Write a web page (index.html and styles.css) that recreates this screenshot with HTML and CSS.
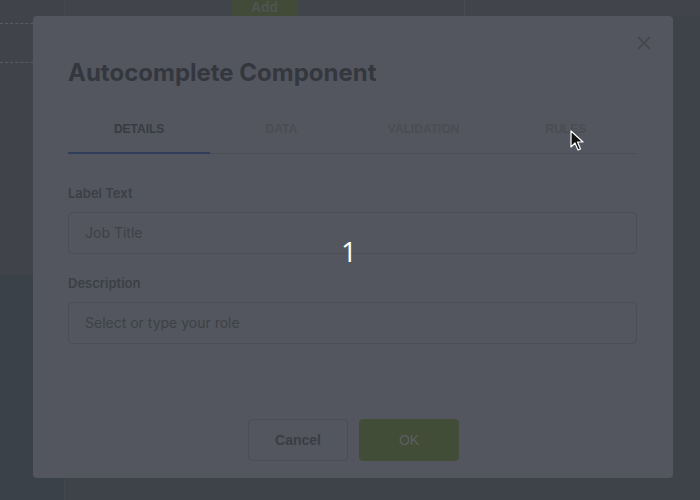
FILE: index.html
```html
<!DOCTYPE html>
<html>
<head>
<meta charset="utf-8">
<link rel="stylesheet" href="styles.css">
</head>
<body>
<div class="page">
  <div class="left-col">
    <div class="left-top"><div class="dash-box"></div></div>
    <div class="left-bottom"></div>
  </div>
  <div class="main">
    <div class="toolbar">
      <div class="add-btn">Add</div>
      <div class="tb-divider"></div>
    </div>
  </div>
</div>

<div class="modal">
  <button class="close" aria-label="Close">
    <svg width="14" height="14" viewBox="0 0 14 14"><path d="M1 1L13 13M13 1L1 13" stroke="#45484f" stroke-width="1.8" fill="none"/></svg>
  </button>
  <h1 class="title">Autocomplete Component</h1>
  <div class="tabs">
    <div class="tab active">DETAILS</div>
    <div class="tab">DATA</div>
    <div class="tab">VALIDATION</div>
    <div class="tab">RULES</div>
  </div>
  <div class="body">
    <label class="field-label">Label Text</label>
    <div class="input">Job Title</div>
    <label class="field-label second">Description</label>
    <div class="input">Select or type your role</div>
  </div>
  <div class="footer">
    <button class="btn cancel">Cancel</button>
    <button class="btn ok">OK</button>
  </div>
</div>

<div class="step-num">1</div>
<svg class="cursor" width="14" height="22" viewBox="0 0 14 22"><path d="M1 1L1 17L5 13L8 20L10.5 19L7.5 12L13 12Z" fill="#111" stroke="#fff" stroke-width="1.2" stroke-linejoin="round"/></svg>
</body>
</html>
```
FILE: styles.css
```css
* { box-sizing: border-box; }
html, body { margin: 0; padding: 0; }
body {
  width: 700px;
  height: 500px;
  overflow: hidden;
  background: #3e4249;
  font-family: Inter, "Liberation Sans", sans-serif;
  position: relative;
}
.page { display: flex; height: 500px; }
.left-col {
  width: 65px;
  border-right: 1px solid #44484e;
  display: flex;
  flex-direction: column;
  background: #404349;
}
.left-top { height: 275px; padding-top: 23px; }
.dash-box {
  height: 40px;
  border-top: 1px dashed #585c63;
  border-bottom: 1px dashed #585c63;
}
.left-bottom { flex: 1; background: #3b4149; }
.main { flex: 1; }
.toolbar {
  height: 16px;
  display: flex;
  background: #41444a;
}
.add-btn {
  margin-left: 167px;
  width: 65px;
  height: 16px;
  background: #414b37;
  color: #4f5453;
  font: 700 14px/14px "Liberation Sans", Arial, sans-serif;
  text-align: center;
}
.tb-divider {
  margin-left: 167px;
  border-left: 1px dashed #4c5057;
}
.modal {
  position: absolute;
  left: 33px;
  top: 16px;
  width: 640px;
  height: 462px;
  background: #53565e;
  border-radius: 4px;
  padding: 42px 36px 17px 35px;
  display: flex;
  flex-direction: column;
}
.close {
  position: absolute;
  right: 22px;
  top: 20px;
  border: 0;
  background: none;
  padding: 0;
  width: 14px;
  height: 14px;
  display: block;
}
.close svg { display: block; }
.title {
  margin: 0;
  font: 700 24px/30px Inter, "Liberation Sans", sans-serif;
  color: #34373e;
}
.tabs {
  margin-top: 17px;
  display: flex;
  border-bottom: 1px solid #4b4e55;
}
.tab {
  flex: 1;
  text-align: center;
  padding: 16px 0 15px;
  font: 700 12px/16px "Liberation Sans", Arial, sans-serif;
  color: #4a4d54;
  border-bottom: 2px solid transparent;
  margin-bottom: -1px;
}
.tab.active {
  color: #383b42;
  border-bottom-color: #303e59;
}
.body { flex: 1; display: flex; flex-direction: column; }
.field-label {
  display: block;
  margin-top: 31px;
  font: 600 13px/16px Inter, "Liberation Sans", sans-serif;
  color: #3c3f46;
}
.field-label.second { margin-top: 21px; }
.input {
  margin-top: 11px;
  height: 42px;
  border: 1px solid #4b4e55;
  border-radius: 4px;
  padding: 0 16px;
  display: flex;
  align-items: center;
  font: 400 14px/20px Inter, "Liberation Sans", sans-serif;
  color: #3e4147;
}
.footer {
  display: flex;
  justify-content: center;
  gap: 11px;
  padding-left: 2px;
}
.btn {
  width: 100px;
  height: 42px;
  border-radius: 4px;
  font: 700 14px/16px "Liberation Sans", Arial, sans-serif;
  padding: 0;
}
.cancel {
  background: transparent;
  border: 1px solid #4b4e55;
  color: #3a3d44;
}
.ok {
  background: #414d36;
  border: 1px solid #414d36;
  color: #5b5f62;
  font-weight: 400;
}
.step-num {
  position: absolute;
  left: 340px;
  top: 234px;
  width: 18px;
  text-align: center;
  color: #ffffff;
  font: 400 28px/34px "Open Sans", sans-serif;
}
.cursor {
  position: absolute;
  left: 570px;
  top: 130px;
}
```
